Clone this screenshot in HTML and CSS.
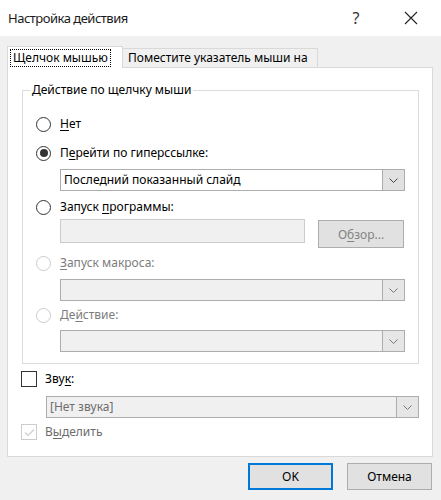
FILE: index.html
```html
<!DOCTYPE html>
<html lang="ru">
<head>
<meta charset="utf-8">
<link rel="stylesheet" href="styles.css">
</head>
<body>
<div class="dialog">
  <div class="titlebar">
    <span class="title">Настройка действия</span>
    <span class="help">?</span>
    <span class="close">
      <svg width="14" height="14" viewBox="0 0 14 14"><path d="M1 1 L13 13 M13 1 L1 13" stroke="#222" stroke-width="1.1" fill="none"/></svg>
    </span>
  </div>
  <div class="content">
    <div class="tabs">
      <div class="tab active"><span class="focus">Щелчок мышью</span></div>
      <div class="tab">Поместите указатель мыши на</div>
    </div>
    <div class="panel">
      <fieldset class="group">
        <legend>Действие по щелчку мыши</legend>
        <div class="row r1"><span class="radio"></span><span class="lbl"><u>Н</u>ет</span></div>
        <div class="row r2"><span class="radio checked"></span><span class="lbl">П<u>е</u>рейти по гиперссылке:</span></div>
        <div class="select s1"><span class="val">Последний показанный слайд</span><span class="arrow"><svg width="9" height="5" viewBox="0 0 9 5"><path d="M0.5 0.5 L4.5 4.5 L8.5 0.5" stroke="#444" fill="none"/></svg></span></div>
        <div class="row r3"><span class="radio"></span><span class="lbl">Запуск <u>п</u>рограммы:</span></div>
        <div class="progrow">
          <div class="textbox"></div>
          <div class="browse">О<u>б</u>зор...</div>
        </div>
        <div class="row r4 disabled"><span class="radio"></span><span class="lbl"><u>З</u>апуск макроса:</span></div>
        <div class="select disabled s2"><span class="val"></span><span class="arrow"><svg width="9" height="5" viewBox="0 0 9 5"><path d="M0.5 0.5 L4.5 4.5 L8.5 0.5" stroke="#777" fill="none"/></svg></span></div>
        <div class="row r5 disabled"><span class="radio"></span><span class="lbl">Де<u>й</u>ствие:</span></div>
        <div class="select disabled s3"><span class="val"></span><span class="arrow"><svg width="9" height="5" viewBox="0 0 9 5"><path d="M0.5 0.5 L4.5 4.5 L8.5 0.5" stroke="#777" fill="none"/></svg></span></div>
      </fieldset>
      <div class="crow c1"><span class="check"></span><span class="lbl">Зву<u>к</u>:</span></div>
      <div class="select disabled s4"><span class="val">[Нет звука]</span><span class="arrow"><svg width="9" height="5" viewBox="0 0 9 5"><path d="M0.5 0.5 L4.5 4.5 L8.5 0.5" stroke="#777" fill="none"/></svg></span></div>
      <div class="crow c2 disabled"><span class="check"><svg width="13" height="13" viewBox="0 0 13 13"><path d="M2 6.5 L5 9.5 L11 3.5" stroke="#cfcfcf" stroke-width="1.2" fill="none"/></svg></span><span class="lbl">В<u>ы</u>делить</span></div>
    </div>
    <div class="buttons">
      <div class="btn ok">OK</div>
      <div class="btn">Отмена</div>
    </div>
  </div>
</div>
</body>
</html>
```
FILE: styles.css
```css
* { box-sizing: border-box; }
html, body { margin: 0; padding: 0; }
body {
  width: 441px;
  height: 500px;
  background: #f0f0f0;
  font-family: "Noto Sans", "Open Sans", sans-serif;
  font-size: 12px;
  color: #000;
  overflow: hidden;
}
u { text-decoration: underline; text-underline-offset: 2px; text-decoration-thickness: 1px; }
.dialog { width: 441px; height: 500px; }
.titlebar {
  height: 36px;
  background: #fff;
  display: flex;
  align-items: center;
  padding-left: 8px;
}
.title { font-size: 13px; color: #1a1a1a; flex: 1; letter-spacing: -0.5px; }
.help { font-size: 16px; color: #333; width: 20px; margin-right: 38px; text-align: center; }
.close { width: 14px; height: 14px; margin-right: 23px; display: flex; }
.content { padding: 10px 9px 0 7px; }
.tabs { display: flex; align-items: flex-end; height: 21px; }
.tab {
  border: 1px solid #d9d9d9;
  border-bottom: none;
  background: #f0f0f0;
  height: 19px;
  padding: 0 6px 0 5px;
  display: flex;
  align-items: center;
  margin-left: -1px;
  line-height: 16px;
}
.tab.active {
  background: #fff;
  height: 22px;
  margin-left: 0;
  margin-bottom: -1px;
  position: relative;
  z-index: 1;
  width: 116px;
  padding: 0 3px;
}
.tab:not(.active) { width: 196px; }
.focus { outline: 1px dotted #000; outline-offset: 0; padding: 0 2px; line-height: 16px; }
.panel {
  background: #fff;
  border: 1px solid #d9d9d9;
  height: 390px;
  width: 426px;
  padding-top: 14px;
}
.group {
  margin: 0 13px 0 14px;
  padding: 0 0 11px 0;
  border: 1px solid #dcdcdc;
  min-width: 0;
}
.group legend { padding: 0 2px; margin-left: 7px; line-height: 16px; }
.row { display: flex; align-items: center; height: 16px; padding-left: 13px; }
.row .lbl { margin-left: 9px; line-height: 16px; }
.r1 { margin-top: 18px; }
.r2 { margin-top: 13px; }
.r3 { margin-top: 8px; }
.r4 { margin-top: 7px; }
.r5 { margin-top: 6px; }
.radio {
  width: 15px; height: 15px;
  border: 1px solid #333;
  border-radius: 50%;
  background: #fff;
  display: flex; align-items: center; justify-content: center;
  flex: none;
}
.radio.checked::after {
  content: ""; width: 8px; height: 8px; border-radius: 50%; background: #333;
}
.disabled .radio { border-color: #cccccc; }
.disabled .lbl { color: #7c7c7c; }
.select {
  display: flex;
  height: 22px;
  border: 1px solid #adadad;
  background: #fff;
  margin-left: 37px;
  width: 345px;
}
.select .val { flex: 1; padding-left: 3px; line-height: 20px; }
.select .arrow {
  width: 22px;
  background: #e1e1e1;
  border-left: 1px solid #adadad;
  display: flex; align-items: center; justify-content: center;
}
.select.disabled { background: #f0f0f0; border-color: #adadad; }
.select.disabled .val { color: #6d6d6d; }
.select.disabled .arrow { background: #e6e6e6; }
.s1 { margin-top: 8px; }
.s2 { margin-top: 8px; }
.s3 { margin-top: 7px; }
.progrow { display: flex; align-items: flex-start; margin-top: 4px; margin-left: 37px; }
.textbox { width: 245px; height: 24px; border: 1px solid #cccccc; background: #f0f0f0; }
.browse {
  margin-left: 13px; margin-top: 1px;
  width: 86px; height: 28px;
  border: 1px solid #adadad; background: #e1e1e1;
  color: #838383;
  display: flex; align-items: center; justify-content: center;
}
.crow { display: flex; align-items: center; height: 16px; padding-left: 13px; }
.crow .lbl { margin-left: 8px; line-height: 16px; }
.check {
  width: 16px; height: 16px; border: 1px solid #333; background: #fff;
  display: flex; align-items: center; justify-content: center; flex: none;
}
.crow.disabled .check { border-color: #cccccc; }
.crow.disabled .lbl { color: #6d6d6d; }
.c1 { margin-top: 7px; }
.c2 { margin-top: 6px; }
.s4 { margin: 9px 0 0 38px; width: 373px; }
.buttons { display: flex; justify-content: flex-end; gap: 14px; margin-top: 6px; }
.btn {
  width: 85px; height: 27px;
  border: 1px solid #adadad; background: #e1e1e1;
  display: flex; align-items: center; justify-content: center;
}
.btn.ok { border: 2px solid #0078d7; }
```
